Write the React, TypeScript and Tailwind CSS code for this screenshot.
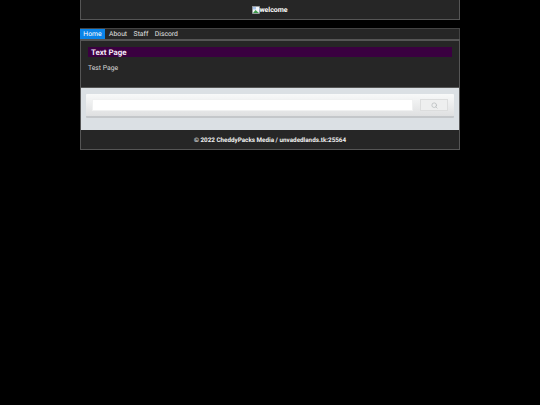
import { Search } from "lucide-react";

const navItems = ["About", "Staff", "Discord"];

function BrokenImage() {
  return (
    <svg width="8" height="8" viewBox="0 0 8 8" className="shrink-0">
      <rect x="0.5" y="0.5" width="7" height="7" fill="#f4f6f8" stroke="#9aa0a6" strokeWidth="0.6" />
      <path d="M1 1h3v2.5H1z" fill="#a8c4ec" />
      <path d="M1 7l2.5-3L7 7z" fill="#3f9a4a" />
    </svg>
  );
}

export default function App() {
  return (
    <div className="min-h-[405px] bg-black font-['Roboto',sans-serif] antialiased [text-rendering:geometricPrecision]">
      <div className="mx-auto flex w-[380px] flex-col">
        <header className="flex h-5 items-center justify-center border border-t-0 border-[#555] bg-[#262626] pt-px">
          <BrokenImage />
          <span className="-ml-px text-[7px] leading-none font-bold text-white">welcome</span>
        </header>

        <nav className="mt-2 flex h-[11px] items-stretch border border-b-0 border-[#444] bg-[#262626] text-[6.8px] text-[#e4e4e4]">
          <a className="-ml-px flex w-[25px] items-center justify-center bg-[#0a84e8] text-white">Home</a>
          <div className="ml-[4px] flex gap-[6.5px]">
            {navItems.map((item) => (
              <a key={item} className="flex items-center">{item}</a>
            ))}
          </div>
        </nav>

        <main className="h-[48px] border border-t-2 border-b-0 border-[#555] bg-[#262626] px-[7px] pt-[6px]">
          <h1 className="flex h-[10px] items-center bg-[#3a0040] pl-[3px] pt-px text-[7.9px] leading-none font-bold text-[#f3e6f5]">
            Text Page
          </h1>
          <p className="mt-[6px] text-[6.8px] leading-[10px] text-[#d8d8d8]">Test Page</p>
        </main>

        <section className="h-[43px] border-t border-x border-[#555] bg-[#dbe0e4] px-[5px] pt-[6px]">
          <div className="flex h-[24px] items-center gap-[7px] rounded-[1px] border-b-2 border-[#c4c7ca] bg-gradient-to-b from-[#f8f9f9] to-[#dfe0e1] pl-[6px] pr-[6px]">
            <div className="h-3 flex-1 border border-[#f0f1f1] bg-white" />
            <button className="flex h-3 w-[28px] items-center justify-center border border-[#dcdddd] bg-[#eeefef]">
              <Search size={7} strokeWidth={2.5} className="text-[#b8bbbd]" />
            </button>
          </div>
        </section>

        <footer className="flex h-5 items-center justify-center border border-t-0 border-[#555] bg-[#262626] pt-px text-[6.3px] leading-none font-bold text-[#f0f0f0]">
          © 2022 CheddyPacks Media / unvadedlands.tk:25564
        </footer>
      </div>
    </div>
  );
}
